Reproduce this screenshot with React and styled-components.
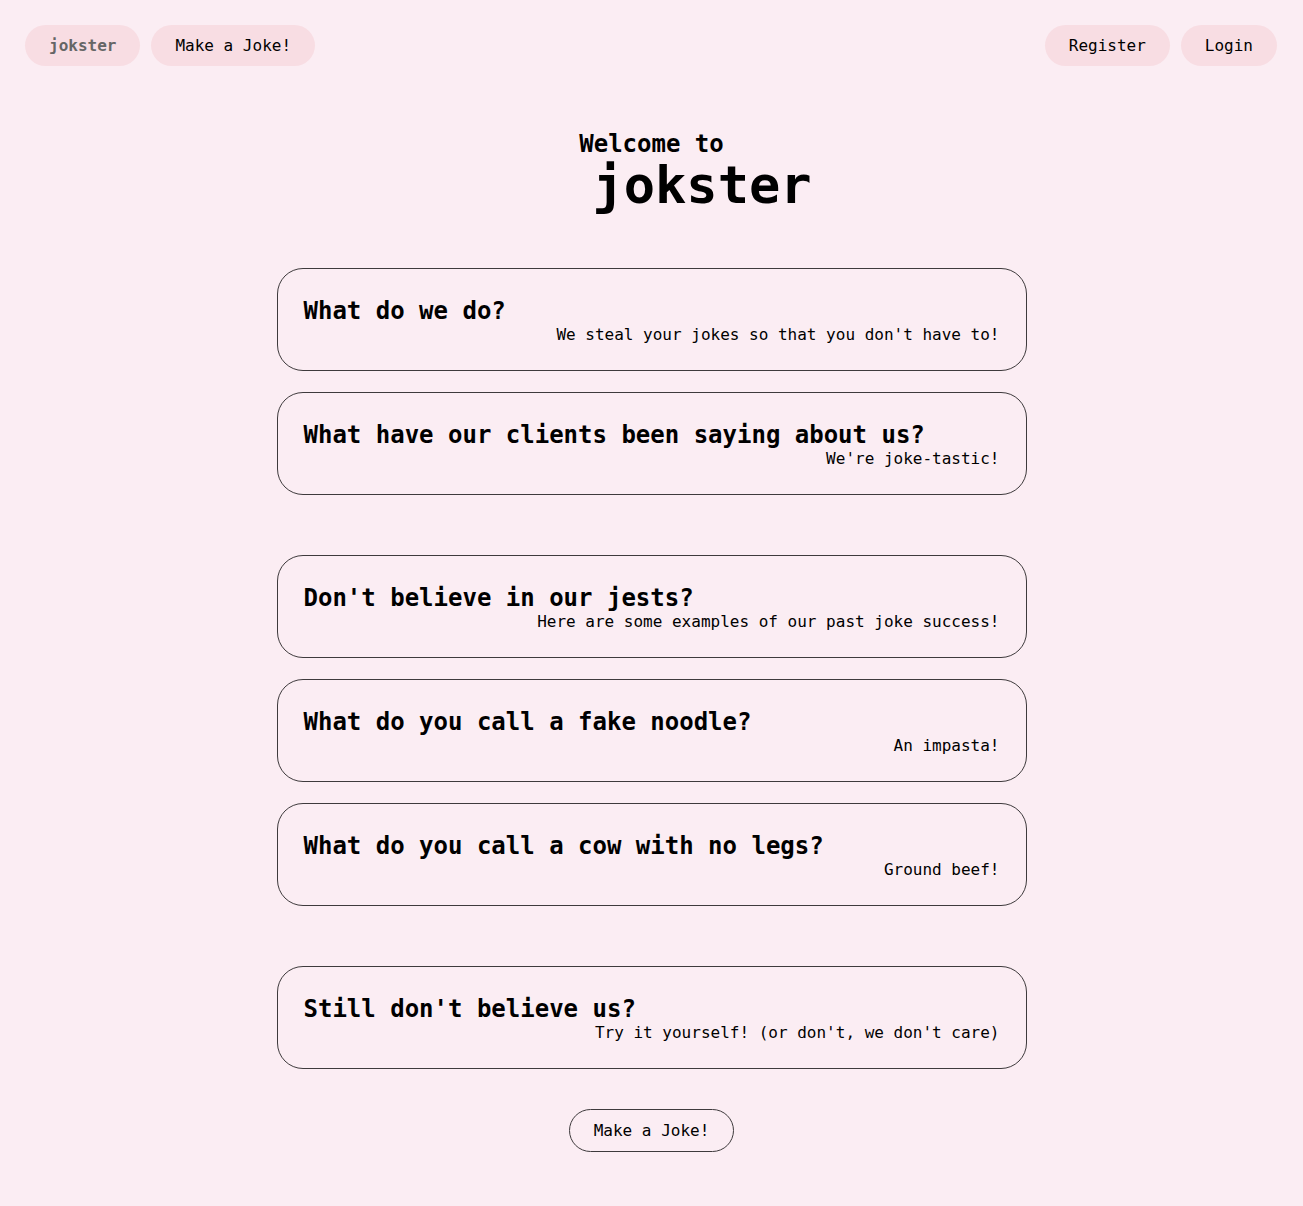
import React from 'react';
import styled, { createGlobalStyle } from 'styled-components';

const GlobalStyle = createGlobalStyle`
  html, body {
    margin: 0;
    padding: 0;
    background-color: #fbedf3;
    font-family: "DejaVu Sans Mono", "Liberation Mono", monospace;
    color: #000;
  }
`

const Page = styled.div`
  min-height: 1206px;
  display: flex;
  flex-direction: column;
`

const Nav = styled.nav`
  display: flex;
  justify-content: space-between;
  align-items: center;
  padding: 25px 26px 0 25px;
`

const NavGroup = styled.div`
  display: flex;
  gap: 11px;
`

const NavButton = styled.button`
  height: 41px;
  padding: 0 24px;
  border: none;
  border-radius: 21px;
  background-color: #f8dde3;
  font-family: inherit;
  font-size: 16px;
  font-weight: ${props => (props.brand ? 'bold' : 'normal')};
  color: ${props => (props.brand ? '#666' : '#000')};
  cursor: pointer;
`

const Titulo = styled.header`
  display: flex;
  flex-direction: column;
  align-items: center;
  margin-top: 64px;
`

const Welcome = styled.div`
  font-size: 24px;
  line-height: 28px;
  font-weight: bold;
`

const Brand = styled.div`
  font-size: 52px;
  line-height: 54px;
  font-weight: bold;
  padding-left: 101px;
`

const Main = styled.main`
  display: flex;
  flex-direction: column;
  align-items: center;
  gap: 60px;
  margin-top: 56px;
`

const Section = styled.section`
  display: flex;
  flex-direction: column;
  gap: 21px;
`

const Card = styled.div`
  width: 750px;
  box-sizing: border-box;
  border: 1px solid #3e3a3c;
  border-radius: 26px;
  padding: 28px 26px 25px;
`

const Question = styled.h2`
  margin: 0;
  font-size: 24px;
  line-height: 28px;
  font-weight: bold;
`

const Answer = styled.p`
  margin: 0;
  font-size: 16px;
  line-height: 20px;
  text-align: right;
`

const Footer = styled.div`
  display: flex;
  justify-content: center;
  margin-top: 40px;
`

const OutlineButton = styled.button`
  height: 43px;
  padding: 0 24px;
  border: 1px solid #3e3a3c;
  border-radius: 22px;
  background: transparent;
  font-family: inherit;
  font-size: 16px;
  color: #000;
  cursor: pointer;
`

const sections = [
  [
    { q: 'What do we do?', a: "We steal your jokes so that you don't have to!" },
    { q: 'What have our clients been saying about us?', a: "We're joke-tastic!" },
  ],
  [
    { q: "Don't believe in our jests?", a: 'Here are some examples of our past joke success!' },
    { q: 'What do you call a fake noodle?', a: 'An impasta!' },
    { q: 'What do you call a cow with no legs?', a: 'Ground beef!' },
  ],
  [
    { q: "Still don't believe us?", a: "Try it yourself! (or don't, we don't care)" },
  ],
]

export default function App() {
  return (
    <Page>
      <GlobalStyle />
      <Nav>
        <NavGroup>
          <NavButton brand>jokster</NavButton>
          <NavButton>Make a Joke!</NavButton>
        </NavGroup>
        <NavGroup>
          <NavButton>Register</NavButton>
          <NavButton>Login</NavButton>
        </NavGroup>
      </Nav>
      <Titulo>
        <Welcome>Welcome to</Welcome>
        <Brand>jokster</Brand>
      </Titulo>
      <Main>
        {sections.map((cards, i) => (
          <Section key={i}>
            {cards.map(card => (
              <Card key={card.q}>
                <Question>{card.q}</Question>
                <Answer>{card.a}</Answer>
              </Card>
            ))}
          </Section>
        ))}
      </Main>
      <Footer>
        <OutlineButton>Make a Joke!</OutlineButton>
      </Footer>
    </Page>
  );
}
